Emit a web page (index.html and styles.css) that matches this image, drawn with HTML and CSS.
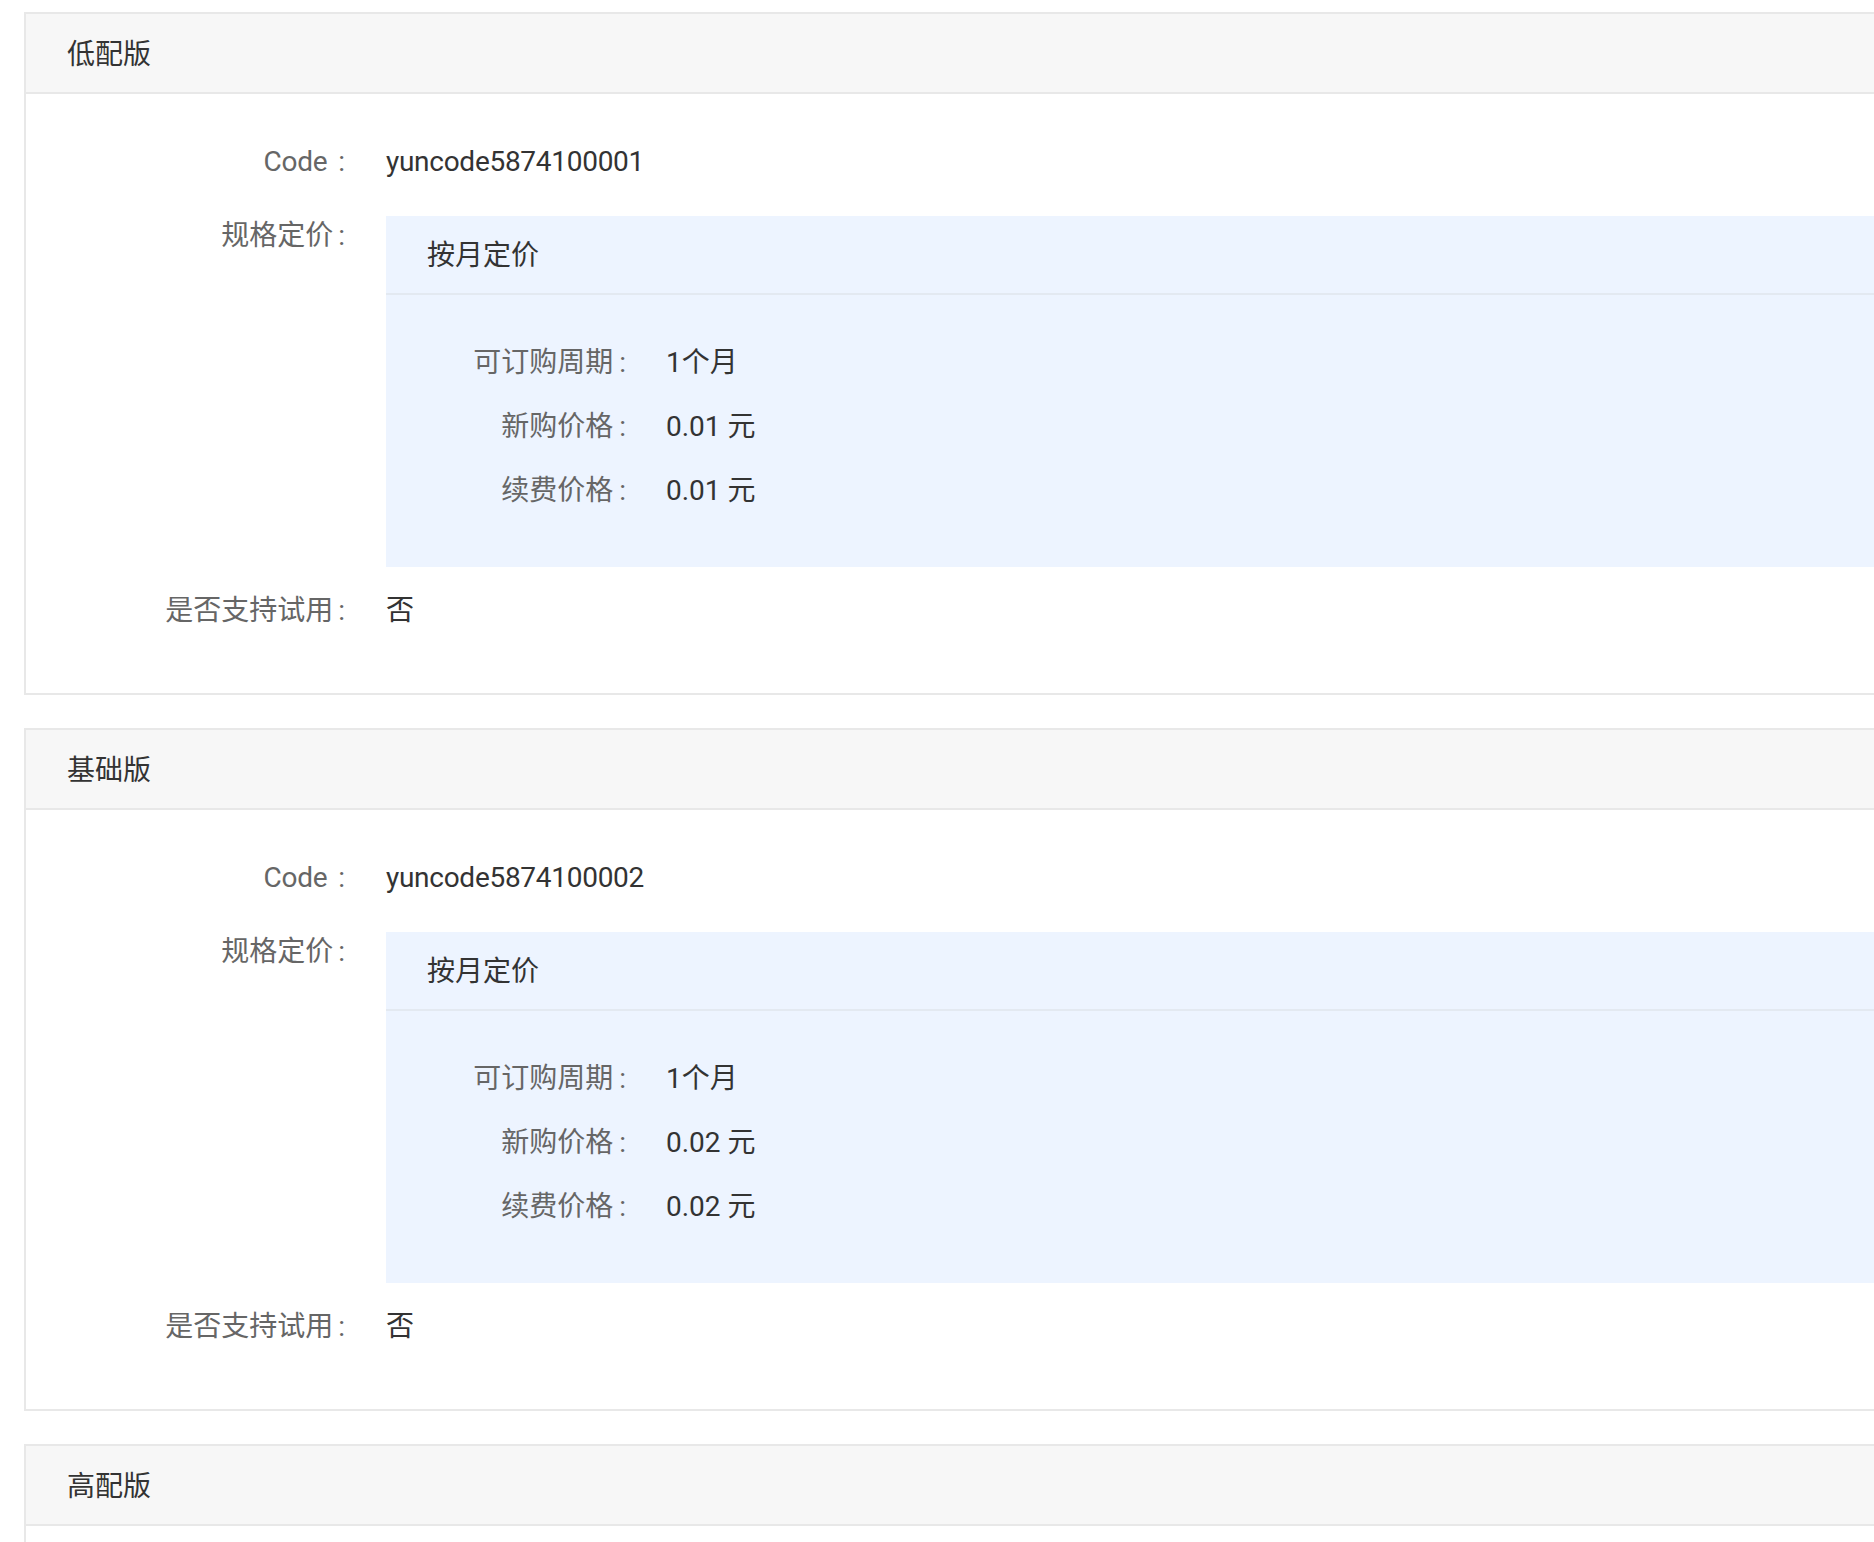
FILE: index.html
```html
<!DOCTYPE html>
<html lang="zh-CN">
<head>
<meta charset="utf-8">
<title>规格列表</title>
<link rel="stylesheet" href="styles.css">
</head>
<body>
<div class="page">
  <section class="sku">
    <header class="sku-head">低配版</header>
    <div class="sku-body">
      <div class="row row-code">
        <div class="label"><span class="txt latin-txt">Code</span><span class="colon latin">:</span></div>
        <div class="value latin-txt">yuncode5874100001</div>
      </div>
      <div class="row row-price">
        <div class="label"><span class="txt">规格定价</span><span class="colon">:</span></div>
        <div class="value">
          <div class="price-box">
            <div class="price-head">按月定价</div>
            <div class="price-body">
              <div class="price-row"><div class="label"><span class="txt">可订购周期</span><span class="colon">:</span></div><div class="value">1个月</div></div>
              <div class="price-row"><div class="label"><span class="txt">新购价格</span><span class="colon">:</span></div><div class="value">0.01 元</div></div>
              <div class="price-row"><div class="label"><span class="txt">续费价格</span><span class="colon">:</span></div><div class="value">0.01 元</div></div>
            </div>
          </div>
        </div>
      </div>
      <div class="row row-trial">
        <div class="label"><span class="txt">是否支持试用</span><span class="colon">:</span></div>
        <div class="value">否</div>
      </div>
    </div>
  </section>

  <section class="sku">
    <header class="sku-head">基础版</header>
    <div class="sku-body">
      <div class="row row-code">
        <div class="label"><span class="txt latin-txt">Code</span><span class="colon latin">:</span></div>
        <div class="value latin-txt">yuncode5874100002</div>
      </div>
      <div class="row row-price">
        <div class="label"><span class="txt">规格定价</span><span class="colon">:</span></div>
        <div class="value">
          <div class="price-box">
            <div class="price-head">按月定价</div>
            <div class="price-body">
              <div class="price-row"><div class="label"><span class="txt">可订购周期</span><span class="colon">:</span></div><div class="value">1个月</div></div>
              <div class="price-row"><div class="label"><span class="txt">新购价格</span><span class="colon">:</span></div><div class="value">0.02 元</div></div>
              <div class="price-row"><div class="label"><span class="txt">续费价格</span><span class="colon">:</span></div><div class="value">0.02 元</div></div>
            </div>
          </div>
        </div>
      </div>
      <div class="row row-trial">
        <div class="label"><span class="txt">是否支持试用</span><span class="colon">:</span></div>
        <div class="value">否</div>
      </div>
    </div>
  </section>

  <section class="sku">
    <header class="sku-head">高配版</header>
    <div class="sku-body sku-body-empty"></div>
  </section>
</div>
</body>
</html>
```

FILE: styles.css
```css
html, body {
  margin: 0;
  padding: 0;
  background: #ffffff;
  overflow: hidden;
}

body {
  font-family: Roboto, "Noto Sans CJK SC", sans-serif;
  font-size: 28px;
  color: #333333;
}

.page {
  padding: 12px 0 0 24px;
}

.sku {
  border: 2px solid #e8e8e8;
  margin-right: -40px;
  margin-bottom: 33px;
}

.sku-head {
  height: 74px;
  line-height: 74px;
  padding: 4px 0 0 41px;
  background: #f7f7f7;
  border-bottom: 2px solid #e8e8e8;
  color: #333333;
}

.sku-body {
  padding: 47px 0 64px;
}

.sku-body-empty {
  height: 200px;
}

.row {
  display: flex;
  line-height: 40px;
}

.label {
  flex: none;
  width: 360px;
  box-sizing: border-box;
  padding-right: 41px;
  text-align: right;
  color: #666666;
  white-space: nowrap;
}

.latin-txt {
  letter-spacing: -0.28px;
}

.colon {
  margin-left: 5px;
}

.colon.latin {
  margin-left: 11px;
}

.value {
  flex: 1;
  min-width: 0;
  color: #333333;
}

.row-code {
  margin-bottom: 34px;
  padding-top: 1px;
}

.row-price {
  margin-bottom: 23px;
}

.row-price > .label {
  line-height: 40px;
}

.row-trial {
  padding-top: 1px;
  margin-bottom: -2px;
}

.price-box {
  background: #edf4ff;
}

.price-head {
  height: 75px;
  line-height: 75px;
  padding: 2px 0 0 41px;
  border-bottom: 2px solid #e3e9f1;
  color: #333333;
}

.price-body {
  padding: 48px 0 56px;
}

.price-row {
  display: flex;
  line-height: 40px;
}

.price-row + .price-row {
  margin-top: 24px;
}

.price-row .label {
  width: 280px;
  padding-right: 40px;
}

.price-row .colon {
  margin-left: 6px;
}
```
